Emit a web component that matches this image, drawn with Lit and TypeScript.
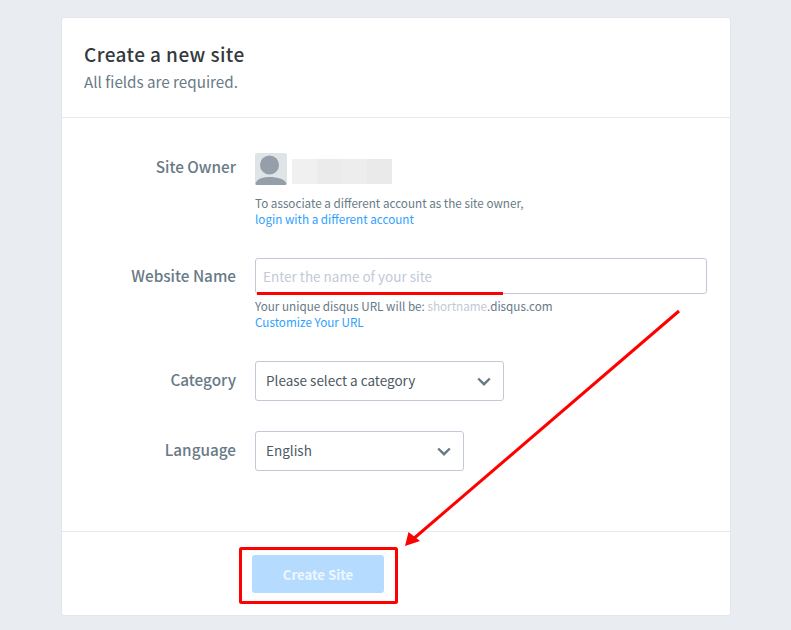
import { LitElement, html, css, svg } from "lit";
import { customElement } from "lit/decorators.js";

@customElement("app-root")
export class AppRoot extends LitElement {
  static styles = css`
    :host {
      display: block;
      position: relative;
      width: 791px;
      height: 630px;
      overflow: hidden;
      box-sizing: border-box;
      padding: 17px 60px 14px 61px;
      background: #e9edf2;
      font-family: "Noto Sans CJK SC", "Noto Sans", sans-serif;
      color: #687a86;
    }
    .card {
      height: 599px;
      box-sizing: border-box;
      background: #fff;
      border: 1px solid #e3e7eb;
      border-radius: 3px;
      display: flex;
      flex-direction: column;
    }
    .head {
      height: 100px;
      box-sizing: border-box;
      padding: 23px 22px 0;
      border-bottom: 1px solid #e7e9ee;
    }
    h1 {
      margin: 0;
      font-size: 19px;
      letter-spacing: 0.42px;
      line-height: 26px;
      font-weight: 500;
      color: #33393c;
    }
    .sub {
      font-size: 15.2px;
      line-height: 24px;
      margin-top: 2px;
      color: #687a86;
    }
    .body {
      flex: 1;
      display: flex;
      flex-direction: column;
      padding-top: 34px;
    }
    .row {
      display: grid;
      grid-template-columns: 174px 1fr;
      column-gap: 19px;
    }
    .label {
      text-align: right;
      font-size: 15.3px;
      line-height: 28px;
      font-weight: 500;
      color: #687a86;
    }
    .owner { height: 106px; }
    .who { display: flex; gap: 5px; align-items: flex-start; height: 32px; margin-top: 1px; }
    .avatar {
      width: 32px;
      height: 32px;
      display: block;
      border-radius: 2px;
    }
    .blur {
      width: 100px;
      height: 25px;
      margin-top: 6px;
      background: linear-gradient(90deg, #f0f0f0 0 25%, #ebebeb 25% 50%, #ededed 50% 75%, #eaeaea 75%);
    }
    .hint {
      font-size: 11.7px;
      line-height: 16px;
      color: #687a86;
    }
    .owner .hint { margin-top: 10px; }
    a { color: #2e9fff; text-decoration: none; }
    .site { height: 103px; }
    .site .label { padding-top: 3px; }
    .input {
      width: 452px;
      height: 36px;
      box-sizing: border-box;
      border: 1px solid #c2c9d6;
      border-radius: 3px;
      padding: 0 7px;
      font-size: 13.5px;
      line-height: 35px;
      color: #c2c9d6;
    }
    .site .hint { margin-top: 4px; line-height: 15.5px; }
    .muted { color: #c2c9d6; }
    .select {
      height: 40px;
      box-sizing: border-box;
      border: 1px solid #c2c9d6;
      border-radius: 3px;
      padding: 0 12px 0 10px;
      font-size: 13.5px;
      color: #4d5a63;
      display: flex;
      align-items: center;
      justify-content: space-between;
    }
    .select span { margin-bottom: 2px; }
    .cat { height: 70px; }
    .cat .label, .lang .label { padding-top: 4px; }
    .cat .select { width: 249px; }
    .lang .select { width: 209px; }
    .chev { width: 14px; height: 9px; display: block; }
    .foot {
      height: 84px;
      box-sizing: border-box;
      border-top: 1px solid #e7e9ee;
      padding: 23px 0 0 190px;
    }
    button {
      display: block;
      width: 132px;
      height: 38px;
      border: 0;
      border-radius: 3px;
      background: #b5dcff;
      color: #eef7ff;
      font: 600 13.2px "Noto Sans CJK SC", "Noto Sans", sans-serif;
      padding: 0;
    }
    .marks {
      position: absolute;
      left: 0;
      top: 0;
      width: 791px;
      height: 630px;
      pointer-events: none;
    }
  `;

  private chevron() {
    return html`<svg class="chev" viewBox="0 0 14 9"><path d="M1.2 1.5 7 7.2 12.8 1.5" fill="none" stroke="#687a86" stroke-width="2.4"/></svg>`;
  }

  render() {
    return html`
      <div class="card">
        <div class="head">
          <h1>Create a new site</h1>
          <div class="sub">All fields are required.</div>
        </div>
        <div class="body">
          <div class="row owner">
            <div class="label">Site Owner</div>
            <div>
              <div class="who">
                <svg class="avatar" viewBox="0 0 32 32">
                  <rect width="32" height="32" fill="#dfe4e7"/>
                  <circle cx="14.5" cy="12" r="9.5" fill="#959fa9"/>
                  <path d="M0 32C1 26 7 24 14.5 24S31 26 32 32Z" fill="#959fa9"/>
                </svg>
                <div class="blur"></div>
              </div>
              <div class="hint">To associate a different account as the site owner,<br/><a>login with a different account</a></div>
            </div>
          </div>
          <div class="row site">
            <div class="label">Website Name</div>
            <div>
              <div class="input">Enter the name of your site</div>
              <div class="hint">Your unique disqus URL will be: <span class="muted">shortname</span>.disqus.com<br/><a>Customize Your URL</a></div>
            </div>
          </div>
          <div class="row cat">
            <div class="label">Category</div>
            <div class="select"><span>Please select a category</span>${this.chevron()}</div>
          </div>
          <div class="row lang">
            <div class="label">Language</div>
            <div class="select"><span>English</span>${this.chevron()}</div>
          </div>
        </div>
        <div class="foot"><button>Create Site</button></div>
      </div>
      <svg class="marks" viewBox="0 0 791 630">
        ${svg`
          <rect x="257" y="292" width="246" height="3" fill="#f00"/>
          <path d="M679 311 412 540" stroke="#f00" stroke-width="3" fill="none"/>
          <path d="M405 546 408.5 532 420 541Z" fill="#f00"/>
          <rect x="240.5" y="548.5" width="156" height="54" rx="1" fill="none" stroke="#f00" stroke-width="3"/>
        `}
      </svg>
    `;
  }
}
